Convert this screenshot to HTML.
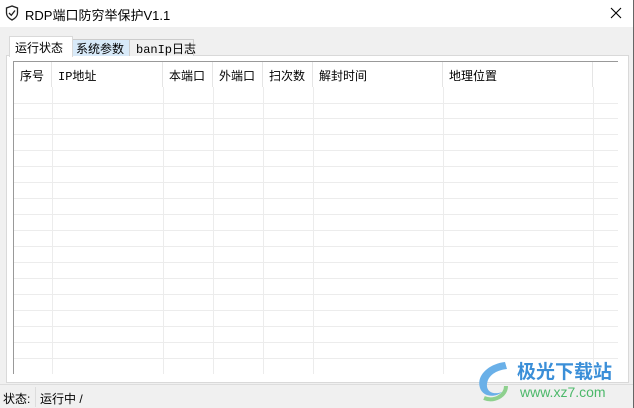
<!DOCTYPE html><html><head><style>
body{margin:0;width:634px;height:408px;background:#f0f0f0;font-family:"Liberation Sans","Noto Sans CJK SC",sans-serif;font-size:12px;position:relative;overflow:hidden;color:#000}
.a{position:absolute}
</style></head><body>
<div class="a" style="left:0;top:0;width:634px;height:27px;background:#fff"></div>
<svg class="a" style="left:5px;top:5px" width="14" height="16" viewBox="0 0 14 16"><path d="M7 1L1.5 3v5c0 3.5 2.5 5.5 5.5 7 3-1.5 5.5-3.5 5.5-7V3z" fill="none" stroke="#222" stroke-width="1.3"/><path d="M4 8l2.3 2.3L10 5.5" fill="none" stroke="#222" stroke-width="1.3"/></svg>
<div class="a" style="left:25px;top:5px;font-size:13px">RDP端口防穷举保护V1.1</div>
<svg class="a" style="left:610px;top:7px" width="12" height="12"><path d="M1 1L11 11M11 1L1 11" stroke="#000" stroke-width="1.1"/></svg>
<div class="a" style="left:633px;top:0;width:1px;height:408px;background:#666"></div>
<div class="a" style="left:6px;top:55px;width:621px;height:326px;background:#fff;border:1px solid #d9d9d9"></div>
<div class="a" style="left:72px;top:39px;width:57px;height:16px;background:#d8eaf9;border:1px solid #ccc;border-bottom:none"></div>
<div class="a" style="left:129px;top:39px;width:63px;height:16px;background:#f0f0f0;border:1px solid #ccc;border-bottom:none"></div>
<div class="a" style="left:9px;top:36px;width:62px;height:20px;background:#fff;border:1px solid #d9d9d9;border-bottom:none"></div>
<div class="a" style="left:15px;top:39px">运行状态</div>
<div class="a" style="left:76px;top:40px">系统参数</div>
<div class="a" style="left:136px;top:40px;font-family:'Liberation Mono','Noto Sans CJK SC',monospace">banIp日志</div>
<div class="a" style="left:13px;top:61px;width:604px;height:312px;border-left:1px solid #999;border-top:1px solid #999;background:#fff;overflow:hidden">
<svg width="604" height="312" style="position:absolute;left:0;top:0">
<g stroke="#ececec" stroke-width="1">
<line x1="0" y1="41.5" x2="604" y2="41.5"/><line x1="0" y1="56.5" x2="604" y2="56.5"/><line x1="0" y1="72.5" x2="604" y2="72.5"/><line x1="0" y1="88.5" x2="604" y2="88.5"/><line x1="0" y1="104.5" x2="604" y2="104.5"/><line x1="0" y1="120.5" x2="604" y2="120.5"/><line x1="0" y1="136.5" x2="604" y2="136.5"/><line x1="0" y1="152.5" x2="604" y2="152.5"/><line x1="0" y1="168.5" x2="604" y2="168.5"/><line x1="0" y1="184.5" x2="604" y2="184.5"/><line x1="0" y1="200.5" x2="604" y2="200.5"/><line x1="0" y1="216.5" x2="604" y2="216.5"/><line x1="0" y1="232.5" x2="604" y2="232.5"/><line x1="0" y1="248.5" x2="604" y2="248.5"/><line x1="0" y1="264.5" x2="604" y2="264.5"/><line x1="0" y1="280.5" x2="604" y2="280.5"/><line x1="0" y1="296.5" x2="604" y2="296.5"/>
<line x1="38.5" y1="0" x2="38.5" y2="312"/><line x1="149.5" y1="0" x2="149.5" y2="312"/><line x1="199.5" y1="0" x2="199.5" y2="312"/><line x1="249.5" y1="0" x2="249.5" y2="312"/><line x1="299.5" y1="0" x2="299.5" y2="312"/><line x1="429.5" y1="0" x2="429.5" y2="312"/><line x1="579.5" y1="0" x2="579.5" y2="312"/>
</g>
<rect x="0" y="0" width="604" height="25" fill="#fff"/>
<g stroke="#e5e5e5"><line x1="37.5" y1="0" x2="37.5" y2="25"/><line x1="148.5" y1="0" x2="148.5" y2="25"/><line x1="198.5" y1="0" x2="198.5" y2="25"/><line x1="248.5" y1="0" x2="248.5" y2="25"/><line x1="298.5" y1="0" x2="298.5" y2="25"/><line x1="428.5" y1="0" x2="428.5" y2="25"/><line x1="578.5" y1="0" x2="578.5" y2="25"/></g>
</svg>
<div class="a" style="left:6px;top:5px">序号</div>
<div class="a" style="left:44px;top:5px;font-family:'Liberation Mono','Noto Sans CJK SC',monospace">IP地址</div>
<div class="a" style="left:155px;top:5px">本端口</div>
<div class="a" style="left:205px;top:5px">外端口</div>
<div class="a" style="left:255px;top:5px">扫次数</div>
<div class="a" style="left:305px;top:5px">解封时间</div>
<div class="a" style="left:435px;top:5px">地理位置</div>
</div>
<div class="a" style="left:0;top:384px;width:633px;height:1px;background:#ddd"></div>
<div class="a" style="left:3px;top:390px">状态:</div>
<div class="a" style="left:35px;top:387px;width:1px;height:20px;background:#ddd"></div>
<div class="a" style="left:40px;top:390px">运行中 /</div>
<div class="a" style="left:517px;top:357px;font-size:19px;font-weight:bold;color:#3b8fd8">极光下载站</div>
<div class="a" style="left:520px;top:384px;font-size:14px;color:#4cb86a">www.xz7.com</div>
<svg class="a" style="left:470px;top:358px" width="45" height="46"><path d="M35 4C18 6 6 18 10 30c3 9 15 10 22 4-8 3-16 0-15-8 1-9 10-14 20-15" fill="#6ab0e8"/><path d="M14 40c10 4 22-2 22-12" stroke="#8ed08e" stroke-width="4" fill="none"/></svg>
</body></html>
